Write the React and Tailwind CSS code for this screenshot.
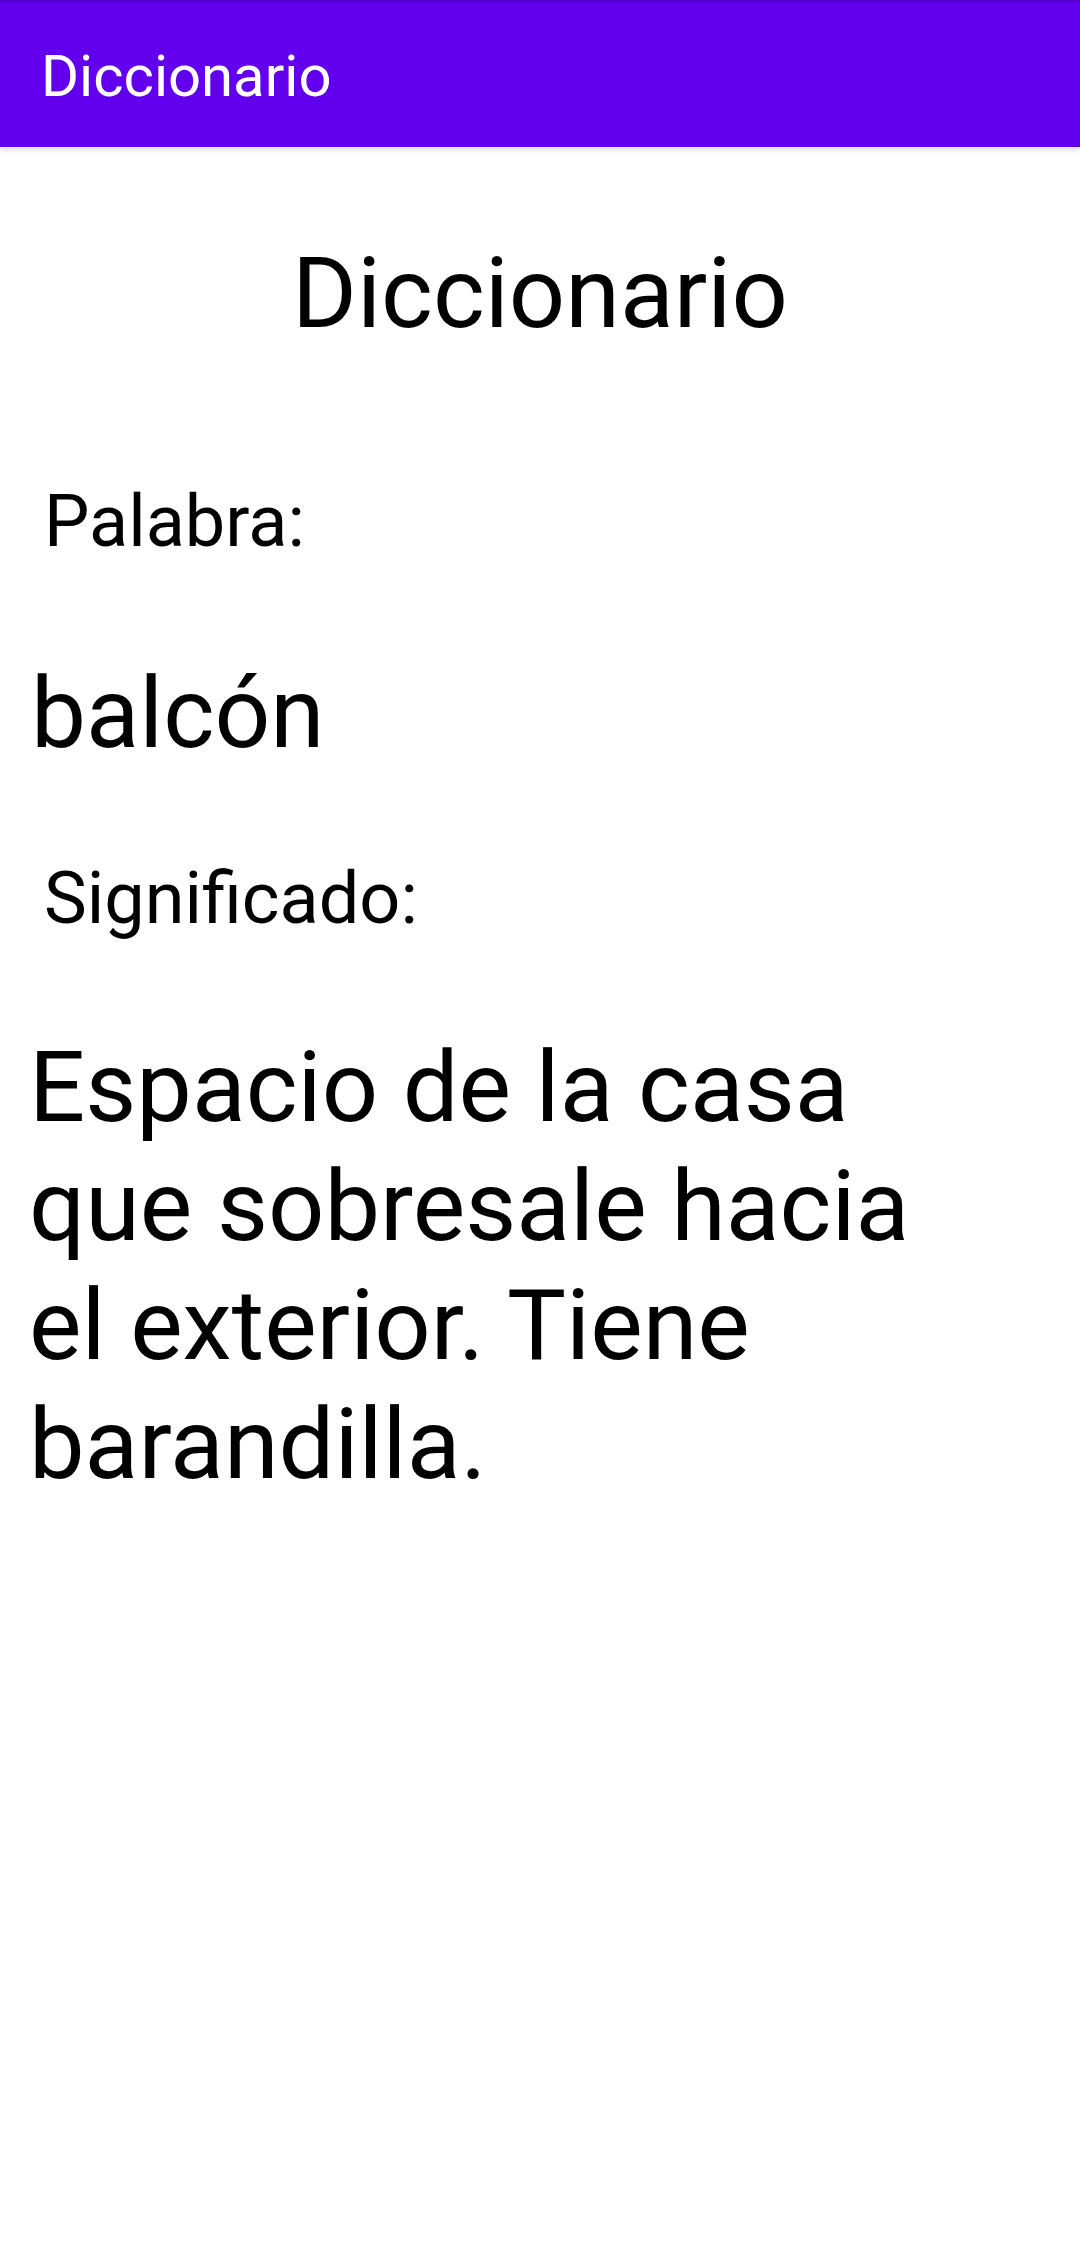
export default function App() {
  const palabra = 'balcón';
  const significado = 'Espacio de la casa que sobresale hacia el exterior. Tiene barandilla.';

  return (
    <div className="min-h-[2258px] w-[1080px] bg-white font-[Roboto,sans-serif] text-black">
      {/* App bar */}
      <header className="h-[147px] bg-[#6200ee] border-t-2 border-[#5400d0] pl-[41px] pt-[40px] shadow-[0_3px_5px_rgba(0,0,0,0.12)]">
        <h1 className="text-[58px] leading-[68px] text-white">Diccionario</h1>
      </header>

      <main className="flex flex-col">
        <h2 className="mt-[88px] text-center text-[99px] leading-[116px]">Diccionario</h2>

        <p className="mt-[129px] pl-[44px] text-[72px] leading-[84px]">Palabra:</p>
        <p className="mt-[92px] pl-[31px] text-[98px] leading-[115px]">{palabra}</p>

        <p className="mt-[86px] pl-[44px] text-[72px] leading-[84px]">Significado:</p>
        <p className="mt-[87px] pl-[29px] w-[960px] text-[99px] leading-[119px]">{significado}</p>
      </main>
    </div>
  );
}
